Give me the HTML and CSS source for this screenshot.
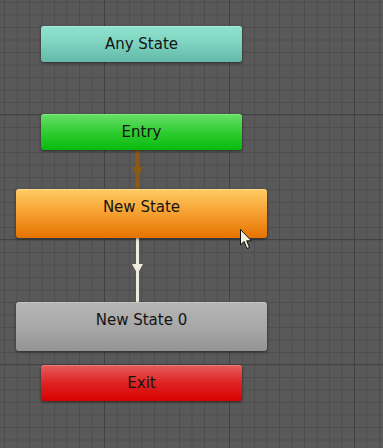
FILE: index.html
```html
<!DOCTYPE html>
<html lang="en">
<head>
    <meta charset="UTF-8">
    <title>Animator</title>
    <link rel="stylesheet" href="styles.css">
</head>
<body>
    <div class="graph">
        <!-- Transitions -->
        <svg class="links" width="383" height="448" viewBox="0 0 383 448">
            <line x1="137.5" y1="150" x2="137.5" y2="189" stroke="#8a5a16" stroke-width="3.5"/>
            <polygon points="132,167 143,167 137.5,178" fill="#8a5a16"/>
            <line x1="137.5" y1="238" x2="137.5" y2="302" stroke="#eeecdc" stroke-width="3"/>
            <polygon points="132,264 143,264 137.5,274" fill="#eeecdc"/>
        </svg>

        <div class="node any-state">Any State</div>
        <div class="node entry">Entry</div>
        <div class="node state default-state">New State</div>
        <div class="node state plain-state">New State 0</div>
        <div class="node exit">Exit</div>

        <!-- Mouse pointer -->
        <svg class="pointer" width="14" height="21" viewBox="0 0 14 21">
            <path d="M0.5 0.5 L0.5 16 L4 12.5 L7 19.5 L9.5 18.5 L6.7 11.8 L11.5 11.8 Z" fill="#f4f0dc" stroke="#111" stroke-width="1"/>
        </svg>
    </div>
</body>
</html>
```

FILE: styles.css
```css
:root {
    --grid-bg: #595959;
    --grid-minor: #4e4e4e;
    --grid-major: #424242;
    --text-color: #141414;
    --radius: 3px;
}

body {
    margin: 0;
    font-family: "DejaVu Sans", Verdana, sans-serif;
    overflow: hidden;
}

.graph {
    position: relative;
    width: 383px;
    height: 448px;
    background-color: var(--grid-bg);
    background-image:
        linear-gradient(to right, var(--grid-major) 1px, transparent 1px),
        linear-gradient(to bottom, var(--grid-major) 1px, transparent 1px),
        linear-gradient(to right, var(--grid-minor) 1px, transparent 1px),
        linear-gradient(to bottom, var(--grid-minor) 1px, transparent 1px);
    background-size: 125px 125px, 125px 125px, 12.5px 12.5px, 12.5px 12.5px;
    background-position: 104px 0, 0 114px, 4px 0, 0 2px;
}

.links {
    position: absolute;
    top: 0;
    left: 0;
}

/* State nodes */
.node {
    position: absolute;
    display: flex;
    align-items: center;
    justify-content: center;
    box-sizing: border-box;
    border-radius: var(--radius);
    color: var(--text-color);
    font-size: 15px;
    box-shadow: 0 1px 3px rgba(0, 0, 0, 0.55);
}

.any-state,
.entry,
.exit {
    left: 41px;
    width: 201px;
    height: 36px;
    padding-bottom: 2px;
}

.state {
    left: 16px;
    width: 251px;
    height: 49px;
    padding-bottom: 14px;
}

.any-state {
    top: 26px;
    background: linear-gradient(#8fe2cd, #80d6c2 40%, #63b8a9);
    border-top: 1px solid #a6ecdb;
}

.entry {
    top: 114px;
    background: linear-gradient(#66de66, #2fcc31 50%, #08ba0d);
    border-top: 1px solid #80ea80;
}

.default-state {
    top: 189px;
    background: linear-gradient(#ffca62, #f59a2a 55%, #e57300);
    border-top: 1px solid #ffd98a;
}

.plain-state {
    top: 302px;
    background: linear-gradient(#b6b6b6, #a6a6a6 55%, #949494);
    border-top: 1px solid #c4c4c4;
}

.exit {
    top: 365px;
    background: linear-gradient(#e65a5a, #de2222 50%, #d80000);
    border-top: 1px solid #ee7a7a;
}

.pointer {
    position: absolute;
    left: 240px;
    top: 229px;
}
```
